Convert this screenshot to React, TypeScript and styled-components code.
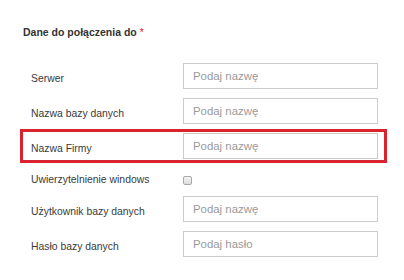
import React from 'react';
import styled, { createGlobalStyle } from 'styled-components';

const GlobalStyle = createGlobalStyle`
    html, body {
        margin: 0;
        padding: 0;
        background: #ffffff;
    }
    body {
        font-family: 'Liberation Sans', Arial, sans-serif;
        color: #333333;
    }
`;

const Panel = styled.div`
    width: 404px;
    height: 280px;
    padding: 26px 0 0 20px;
    box-sizing: border-box;
`;

const Title = styled.h3`
    margin: 0 0 21px 3px;
    font-size: 10.5px;
    font-weight: bold;
    color: #333333;
    line-height: 12px;
`;

const Required = styled.span`
    color: #d9232e;
    font-weight: normal;
`;

const Form = styled.div`
    display: flex;
    flex-direction: column;
    width: 367px;
    gap: 1px;
`;

const Row = styled.div<{ highlighted?: boolean; tall?: boolean }>`
    display: flex;
    align-items: center;
    box-sizing: border-box;
    height: ${(p) => (p.tall ? '27px' : '34px')};
    padding: 0 6px 0 8px;
    border: 3px solid ${(p) => (p.highlighted ? '#d9232e' : 'transparent')};
`;

const Label = styled.label`
    width: 152px;
    flex-shrink: 0;
    font-size: 10.4px;
    color: #3a3a3a;
    padding-top: 4px;
`;

const Input = styled.input`
    box-sizing: border-box;
    width: 195px;
    height: 26px;
    border: 1px solid #cccccc;
    border-radius: 0;
    padding: 0 9px;
    font-family: 'Liberation Sans', Arial, sans-serif;
    font-size: 11.4px;
    color: #555555;
    background: #ffffff;
    outline: none;

    &::placeholder {
        color: #9a9a9a;
    }
`;

const Check = styled.input`
    appearance: none;
    margin: 6px 0 0 0;
    width: 9px;
    height: 9px;
    border: 1px solid #a8a8a8;
    border-radius: 2px;
    background: linear-gradient(#f4f4f4, #dcdcdc);
    box-sizing: border-box;
`;

const fields = [
    { label: 'Serwer', placeholder: 'Podaj nazwę' },
    { label: 'Nazwa bazy danych', placeholder: 'Podaj nazwę' },
    { label: 'Nazwa Firmy', placeholder: 'Podaj nazwę', highlighted: true },
];

const App = () => {
    return (
        <>
            <GlobalStyle />
            <Panel>
                <Title>
                    Dane do połączenia do <Required>*</Required>
                </Title>
                <Form>
                    {fields.map((f) => (
                        <Row key={f.label} highlighted={f.highlighted}>
                            <Label>{f.label}</Label>
                            <Input placeholder={f.placeholder} />
                        </Row>
                    ))}
                    <Row tall>
                        <Label>Uwierzytelnienie windows</Label>
                        <Check type="checkbox" />
                    </Row>
                    <Row>
                        <Label>Użytkownik bazy danych</Label>
                        <Input placeholder="Podaj nazwę" />
                    </Row>
                    <Row>
                        <Label>Hasło bazy danych</Label>
                        <Input type="password" placeholder="Podaj hasło" />
                    </Row>
                </Form>
            </Panel>
        </>
    );
};

export default App;
